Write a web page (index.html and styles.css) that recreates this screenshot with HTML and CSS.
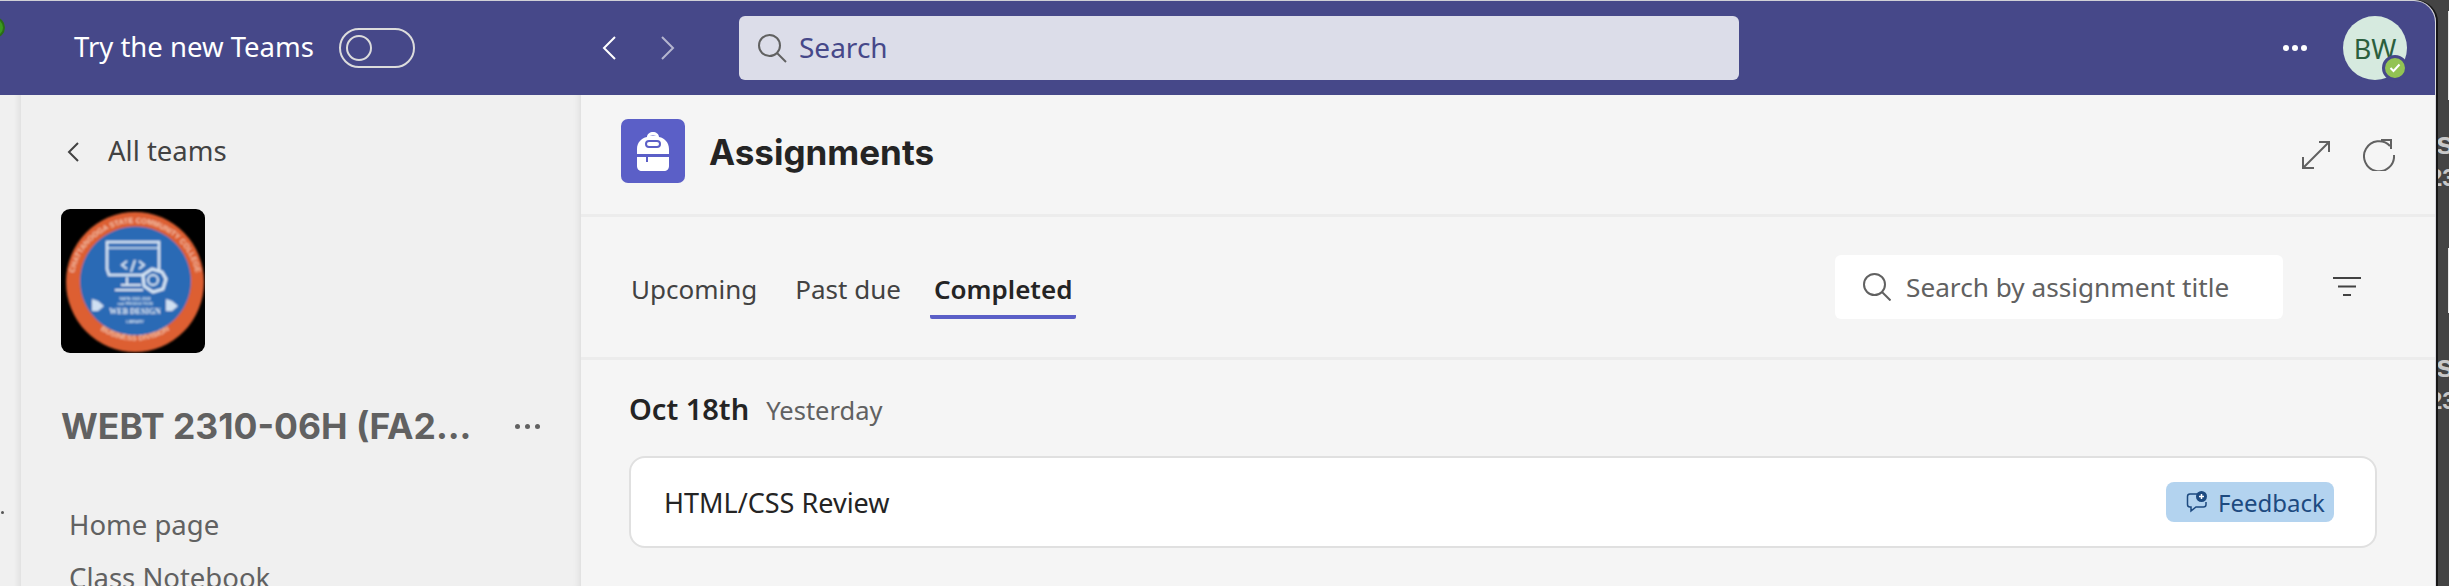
FILE: index.html
```html
<!DOCTYPE html>
<html lang="en">
<head>
    <meta charset="UTF-8">
    <title>Assignments | Microsoft Teams</title>
    <link rel="stylesheet" href="styles.css">
</head>
<body>
    <div class="app">
        <header class="topbar">
            <div class="try-new">
                <span class="lift">Try the new Teams</span>
                <span class="toggle"><span class="knob"></span></span>
            </div>
            <div class="history">
                <svg class="nav-arrow" width="14" height="24" viewBox="0 0 14 24"><path d="M13 1 2 12l11 11" fill="none" stroke="#fff" stroke-width="2"/></svg>
                <svg class="nav-arrow off" width="14" height="24" viewBox="0 0 14 24"><path d="m1 1 11 11L1 23" fill="none" stroke="#b5b6d0" stroke-width="2"/></svg>
            </div>
            <div class="global-search">
                <svg width="30" height="30" viewBox="0 0 30 30"><circle cx="12.500" cy="12.500" r="10.500" fill="none" stroke="#616161" stroke-width="2"/><path d="m20 20 9 9" stroke="#616161" stroke-width="2"/></svg>
                <span class="lift">Search</span>
            </div>
            <div class="topbar-right">
                <span class="dots light"><i></i><i></i><i></i></span>
                <div class="avatar">BW
                    <span class="presence">
                        <svg width="12" height="10" viewBox="0 0 12 10"><path d="m1.500 5 3 3 6-6.500" fill="none" stroke="#fff" stroke-width="2"/></svg>
                    </span>
                </div>
            </div>
        </header>

        <div class="main">
            <div class="rail"></div>

            <aside class="sidebar">
                <div class="back-link">
                    <svg width="12" height="20" viewBox="0 0 12 20"><path d="M11 1 2 10l9 9" fill="none" stroke="#424242" stroke-width="2"/></svg>
                    <span class="lift">All teams</span>
                </div>
                <svg class="team-logo" width="144" height="144" viewBox="0 0 144 144">
                    <defs>
                        <filter id="soft"><feGaussianBlur stdDeviation="1"/></filter>
                        <path id="arc-top" d="M12 76a62 62 0 0 1 124 0"/>
                        <path id="arc-bottom" d="M38 120a62 62 0 0 0 72 0"/>
                    </defs>
                    <rect width="144" height="144" rx="9" fill="#000"/>
                    <g filter="url(#soft)">
                        <ellipse cx="74" cy="73" rx="69" ry="70" fill="#dd5f30"/>
                        <ellipse cx="74.500" cy="72" rx="55.500" ry="54.500" fill="#2a6bb5"/>
                        <text class="logo-ring"><textPath href="#arc-top" startOffset="50%" text-anchor="middle">CHATTANOOGA STATE COMMUNITY COLLEGE</textPath></text>
                        <text class="logo-ring"><textPath href="#arc-bottom" startOffset="50%" text-anchor="middle">BUSINESS DIVISION</textPath></text>
                        <g fill="none" stroke="#d7e6f5" stroke-width="2.500">
                            <path d="M46 60V33h52v33H48z"/>
                            <path d="M46 39h52" stroke-width="1.500"/>
                            <path d="M66 60l-5-4 5-4M78 60l5-4-5-4M70 63l4-12" stroke-width="2"/>
                            <path d="M66 68v8M54 81h28M60 76h20" stroke-width="2"/>
                            <path d="M82 66l9-6 10 3 4 7-3 10-10 3-9-6z" fill="#2a6bb5" stroke-width="3"/>
                            <circle cx="92" cy="71" r="5" stroke-width="2"/>
                        </g>
                        <path d="M31 102V90l6 2 6 5-6 5zM105 102V90l6 2 6 5-6 5z" fill="#cfe0f2"/>
                        <text class="logo-small" x="74" y="91" text-anchor="middle">NAPA 2022-2024</text>
                        <text class="logo-small" x="74" y="96" text-anchor="middle">and PRODUCTION</text>
                        <text class="logo-web" x="74" y="105" text-anchor="middle">WEB DESIGN</text>
                        <text class="logo-small" x="74" y="114" text-anchor="middle">LIBRARY</text>
                    </g>
                </svg>
                <div class="team-title">
                    <h2>WEBT 2310-06H (FA2...</h2>
                    <span class="dots"><i></i><i></i><i></i></span>
                </div>
                <nav class="team-nav">
                    <a>Home page</a>
                    <a>Class Notebook</a>
                </nav>
            </aside>

            <section class="content">
                <div class="page-head">
                    <div class="app-icon">
                        <svg width="64" height="64" viewBox="0 0 64 64"><path d="M26 18c0-3 3-5 6-5s6 2 6 5c6 1 10 6 10 12v5H16v-5c0-6 4-11 10-12zm3-1c1-1 5-1 6 0-2-.500-4-.500-6 0z" fill="#fff" fill-rule="evenodd"/><rect x="25" y="22" width="14" height="6" rx="3" fill="#fff" stroke="#5b5fc7" stroke-width="2"/><path d="M16 38h9v5h2v-5h21v9c0 3-2 5-5 5H21c-3 0-5-2-5-5z" fill="#fff"/></svg>
                    </div>
                    <h1>Assignments</h1>
                    <div class="head-actions">
                        <svg width="28" height="28" viewBox="0 0 28 28"><path d="M2 26 27 1M17 1h10v10M1 16v11h11" fill="none" stroke="#616161" stroke-width="2"/></svg>
                        <svg width="32" height="32" viewBox="0 0 32 32"><path d="M27 7a15 15 0 1 0 4 9" fill="none" stroke="#616161" stroke-width="2"/><path d="M18 1h10v9" fill="none" stroke="#616161" stroke-width="2"/></svg>
                    </div>
                </div>

                <div class="toolbar">
                    <div class="tabs">
                        <a class="tab">Upcoming</a>
                        <a class="tab">Past due</a>
                        <a class="tab active">Completed</a>
                    </div>
                    <div class="assign-search">
                        <svg width="28" height="28" viewBox="0 0 28 28"><circle cx="11.500" cy="11.500" r="10.500" fill="none" stroke="#616161" stroke-width="2"/><path d="m19 19 8.500 8.500" stroke="#616161" stroke-width="2"/></svg>
                        <span>Search by assignment title</span>
                    </div>
                    <svg class="filter" width="28" height="20" viewBox="0 0 28 20"><path d="M0 1h28M5 9.500h18M10 18h8" stroke="#424242" stroke-width="2"/></svg>
                </div>

                <div class="list">
                    <div class="date-line"><strong>Oct 18th</strong><span>Yesterday</span></div>
                    <div class="card">
                        <span class="card-title">HTML/CSS Review</span>
                        <span class="badge">
                            <svg width="22" height="22" viewBox="0 0 22 22"><path d="M11 3H4C2.500 3 1.500 4 1.500 5.500v8C1.500 15 2.500 16 4 16h1v4l5-4h7.500c1.500 0 2.500-1 2.500-2.500V11" fill="none" stroke="#1d4a80" stroke-width="1.500"/><circle cx="15.500" cy="5.500" r="5.500" fill="#1d4a80"/><path d="M15.500 3v5M13 5.500h5" stroke="#fff" stroke-width="1.500"/></svg>
                            Feedback
                        </span>
                    </div>
                </div>
            </section>
        </div>
    </div>

    <!-- bits of other desktop windows showing around the app -->
    <span class="peek green-dot"></span>
    <span class="peek tiny-dot"></span>
    <span class="peek sliver upper"></span>
    <span class="peek sliver lower"></span>
    <div class="peek side-text first"><b>s</b><br><span class="digits">23</span></div>
    <div class="peek side-text second"><b>s</b><br><span class="digits">23</span></div>
</body>
</html>
```

FILE: styles.css
```css
* {
    box-sizing: border-box;
}

html, body {
    height: 100%;
}

body {
    margin: 0;
    width: 2449px;
    height: 586px;
    overflow: hidden;
    position: relative;
    background-color: #444;
    font-family: "Noto Sans", "Open Sans", sans-serif;
    color: #424242;
}

h1, h2 {
    margin: 0;
}

.lift {
    padding-bottom: 3px;
}

.app {
    position: relative;
    z-index: 1;
    width: 2436px;
    height: 586px;
    display: flex;
    flex-direction: column;
    background-color: #f5f5f5;
    border-top: 1px solid #d0d0d6;
    border-right: 1px solid #d8d8de;
    border-top-right-radius: 22px;
    box-shadow: 2px 0 0 #161616;
    overflow: hidden;
}

/* top bar */
.topbar {
    height: 94px;
    flex: none;
    display: flex;
    align-items: center;
    background-color: #464889;
    color: #fff;
}

.try-new {
    width: 602px;
    padding-left: 74px;
    display: flex;
    align-items: center;
    gap: 25px;
    font-size: 27.500px;
}

.toggle {
    width: 76px;
    height: 40px;
    border: 2px solid #dcdcdc;
    border-radius: 20px;
    padding: 5px;
    display: block;
}

.knob {
    display: block;
    width: 26px;
    height: 26px;
    border: 2px solid #dcdcdc;
    border-radius: 50%;
}

.history {
    width: 137px;
    display: flex;
    gap: 45px;
}

.global-search {
    width: 1000px;
    height: 64px;
    padding-left: 18px;
    display: flex;
    align-items: center;
    gap: 12px;
    background-color: #dcdde9;
    border-radius: 6px;
    font-size: 28px;
    color: #464889;
}

.topbar-right {
    flex: 1;
    display: flex;
    justify-content: flex-end;
    align-items: center;
    gap: 36px;
    padding-right: 28px;
}

.dots {
    display: inline-flex;
    gap: 5px;
}

.dots i {
    width: 5px;
    height: 5px;
    border-radius: 50%;
    background-color: #616161;
}

.dots.light {
    gap: 3px;
}

.dots.light i {
    width: 6px;
    height: 6px;
    background-color: #fff;
}

.avatar {
    width: 64px;
    height: 64px;
    position: relative;
    display: flex;
    align-items: center;
    justify-content: center;
    border-radius: 50%;
    background-color: #d6eadf;
    color: #2b5f3d;
    font-size: 27px;
}

.presence {
    position: absolute;
    right: -1px;
    bottom: -1px;
    width: 26px;
    height: 26px;
    display: flex;
    align-items: center;
    justify-content: center;
    border-radius: 50%;
    background-color: #92c353;
    border: 3px solid #464889;
}

.main {
    flex: 1;
    display: flex;
    min-height: 0;
}

.rail {
    width: 21px;
    flex: none;
    background: linear-gradient(to right, #f0f0f0, #f0f0f0 14px, #e2e2e2);
}

/* team sidebar */
.sidebar {
    width: 560px;
    flex: none;
    padding: 0 0 0 40px;
    background-color: #f0f0f0;
    box-shadow: inset -8px 0 8px -8px rgba(0, 0, 0, 0.12);
}

.back-link {
    display: flex;
    align-items: center;
    gap: 29px;
    padding: 37px 0 0 6px;
    height: 77px;
    font-size: 27.500px;
}

.team-logo {
    display: block;
    margin-top: 37px;
}

.logo-ring {
    font-family: "Liberation Sans", sans-serif;
    font-size: 7.500px;
    font-weight: 700;
    fill: #f3c3ab;
}

.logo-small {
    font-family: "Liberation Sans", sans-serif;
    font-size: 4px;
    font-weight: 700;
    fill: #dbe8f6;
}

.logo-web {
    font-family: "Liberation Serif", serif;
    font-size: 8px;
    font-weight: 700;
    fill: #e6eff9;
}

.team-title {
    display: flex;
    align-items: center;
    justify-content: space-between;
    width: 479px;
    margin-top: 52px;
}

.team-title h2 {
    font-family: Inter, "Noto Sans", sans-serif;
    font-size: 35.500px;
    font-weight: 700;
    color: #616161;
}

.team-nav {
    padding: 58px 0 0 8px;
    display: flex;
    flex-direction: column;
    gap: 16px;
    font-size: 27.500px;
    color: #616161;
}

/* assignments */
.content {
    flex: 1;
    min-width: 0;
}

.page-head {
    height: 122px;
    padding: 24px 40px 0 40px;
    display: flex;
    align-items: flex-start;
    border-bottom: 3px solid #ececec;
}

.app-icon {
    width: 64px;
    height: 64px;
    border-radius: 7px;
    background-color: #5b5fc7;
}

.page-head h1 {
    margin-left: 24px;
    font-family: Inter, "Noto Sans", sans-serif;
    font-size: 35px;
    font-weight: 700;
    line-height: 67px;
    color: #242424;
}

.head-actions {
    margin-left: auto;
    display: flex;
    align-items: center;
    gap: 33px;
    height: 64px;
    padding-top: 8px;
}

.toolbar {
    height: 143px;
    padding: 0 74px 0 50px;
    display: flex;
    align-items: center;
    border-bottom: 3px solid #ececec;
}

.tabs {
    display: flex;
    gap: 38px;
    align-self: stretch;
    padding-top: 38px;
}

.tab {
    height: 64px;
    font-size: 26px;
    line-height: 68px;
    color: #424242;
}

.tab.active {
    margin-left: -9px;
    padding: 0 4px;
    font-weight: 600;
    color: #242424;
    border-bottom: 4px solid #5b5fc7;
    border-radius: 2px;
}

.assign-search {
    margin-left: auto;
    width: 448px;
    height: 64px;
    padding-left: 28px;
    display: flex;
    align-items: center;
    gap: 15px;
    background-color: #fff;
    border-radius: 6px;
    font-size: 26.200px;
    color: #616161;
}

.filter {
    margin-left: 50px;
}

.list {
    padding: 29px 58px 0 48px;
}

.date-line {
    display: flex;
    align-items: baseline;
    gap: 17px;
    font-size: 25.500px;
    color: #616161;
}

.date-line strong {
    font-size: 29px;
    font-weight: 600;
    color: #242424;
}

.card {
    height: 92px;
    margin-top: 28px;
    padding: 0 41px 0 33px;
    display: flex;
    align-items: center;
    justify-content: space-between;
    background-color: #fff;
    border: 2px solid #e0e0e0;
    border-radius: 16px;
    font-size: 27px;
    color: #242424;
}

.badge {
    width: 168px;
    height: 40px;
    padding-left: 20px;
    display: flex;
    align-items: center;
    gap: 10px;
    background-color: #b3d3ef;
    border-radius: 8px;
    font-size: 24px;
    color: #1d4a80;
}

/* other windows behind the app */
.peek {
    position: absolute;
}

.green-dot {
    z-index: 2;
    left: -16px;
    top: 17px;
    width: 21px;
    height: 21px;
    border-radius: 50%;
    background-color: #3b9a1f;
    border: 2px solid #2a6e16;
}

.tiny-dot {
    z-index: 2;
    left: 1px;
    top: 511px;
    width: 3px;
    height: 3px;
    border-radius: 50%;
    background-color: #555;
}

.sliver {
    left: 2448px;
    width: 1px;
    background-color: #e8e8e8;
}

.sliver.upper {
    top: 11px;
    height: 89px;
}

.sliver.lower {
    top: 248px;
    height: 65px;
}

.side-text {
    left: 2423px;
    width: 40px;
    padding-left: 13px;
    font-family: "Liberation Sans", sans-serif;
    font-size: 24px;
    font-weight: 700;
    line-height: 32px;
    color: #c8c8c8;
}

.side-text b {
    font-size: 32px;
}

.digits {
    margin-left: -7px;
}

.side-text.first {
    top: 127px;
}

.side-text.second {
    top: 350px;
}
```
